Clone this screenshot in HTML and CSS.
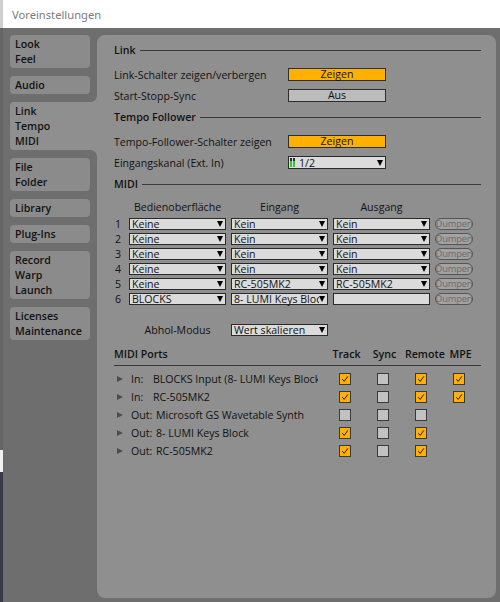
FILE: index.html
```html
<!DOCTYPE html>
<html lang="de">
<head>
<meta charset="utf-8">
<title>Voreinstellungen</title>
<link rel="stylesheet" href="styles.css">
</head>
<body>
<div class="screen">
  <div class="edge"><div class="e1"></div><div class="e2"></div><div class="e3"></div><div class="e4"></div></div>
  <div class="window">
    <div class="titlebar">Voreinstellungen</div>
    <div class="main">
      <nav class="tabs">
        <div class="tab">Look<br>Feel</div>
        <div class="tab">Audio</div>
        <div class="tab active">Link<br>Tempo<br>MIDI</div>
        <div class="tab">File<br>Folder</div>
        <div class="tab">Library</div>
        <div class="tab">Plug-Ins</div>
        <div class="tab">Record<br>Warp<br>Launch</div>
        <div class="tab">Licenses<br>Maintenance</div>
      </nav>
      <section class="panel">
        <div class="sec first"><span>Link</span><i class="rule"></i></div>
        <div class="row"><span class="label">Link-Schalter zeigen/verbergen</span><span class="btn on">Zeigen</span></div>
        <div class="row"><span class="label">Start-Stopp-Sync</span><span class="btn off">Aus</span></div>

        <div class="sec"><span>Tempo Follower</span><i class="rule"></i></div>
        <div class="row"><span class="label">Tempo-Follower-Schalter zeigen</span><span class="btn on">Zeigen</span></div>
        <div class="row"><span class="label">Eingangskanal (Ext. In)</span><span class="dd wide"><span class="meter"></span><span class="v">1/2</span></span></div>

        <div class="sec"><span>MIDI</span><i class="rule"></i></div>
        <div class="grid colhead">
          <span></span><span>Bedienoberfläche</span><span>Eingang</span><span>Ausgang</span><span></span>
        </div>
        <div class="grid midi">
          <span class="num">1</span><span class="dd"><span class="v">Keine</span></span><span class="dd"><span class="v">Kein</span></span><span class="dd"><span class="v">Kein</span></span><span class="dump">Dumpen</span>
          <span class="num">2</span><span class="dd"><span class="v">Keine</span></span><span class="dd"><span class="v">Kein</span></span><span class="dd"><span class="v">Kein</span></span><span class="dump">Dumpen</span>
          <span class="num">3</span><span class="dd"><span class="v">Keine</span></span><span class="dd"><span class="v">Kein</span></span><span class="dd"><span class="v">Kein</span></span><span class="dump">Dumpen</span>
          <span class="num">4</span><span class="dd"><span class="v">Keine</span></span><span class="dd"><span class="v">Kein</span></span><span class="dd"><span class="v">Kein</span></span><span class="dump">Dumpen</span>
          <span class="num">5</span><span class="dd"><span class="v">Keine</span></span><span class="dd"><span class="v">RC-505MK2</span></span><span class="dd"><span class="v">RC-505MK2</span></span><span class="dump">Dumpen</span>
          <span class="num">6</span><span class="dd"><span class="v">BLOCKS</span></span><span class="dd"><span class="v clip">8- LUMI Keys Block</span></span><span class="dd empty"></span><span class="dump">Dumpen</span>
        </div>
        <div class="grid abhol">
          <span></span><span class="ablabel">Abhol-Modus</span><span class="dd"><span class="v">Wert skalieren</span></span>
        </div>

        <div class="ports head">
          <span class="phead">MIDI Ports</span><span class="ch">Track</span><span class="ch">Sync</span><span class="ch">Remote</span><span class="ch">MPE</span>
        </div>
        <div class="prule"></div>
        <div class="ports">
          <span class="port"><i class="tri"></i><span class="lab">In:</span><span class="nm clip">BLOCKS Input (8- LUMI Keys Block)</span></span>
          <span class="cb on"><svg viewBox="0 0 10 10"><path d="M2.3 5.2 L4.2 7.4 L7.9 2.3"/></svg></span><span class="cb"></span><span class="cb on"><svg viewBox="0 0 10 10"><path d="M2.3 5.2 L4.2 7.4 L7.9 2.3"/></svg></span><span class="cb on"><svg viewBox="0 0 10 10"><path d="M2.3 5.2 L4.2 7.4 L7.9 2.3"/></svg></span>

          <span class="port"><i class="tri"></i><span class="lab">In:</span><span class="nm">RC-505MK2</span></span>
          <span class="cb on"><svg viewBox="0 0 10 10"><path d="M2.3 5.2 L4.2 7.4 L7.9 2.3"/></svg></span><span class="cb"></span><span class="cb on"><svg viewBox="0 0 10 10"><path d="M2.3 5.2 L4.2 7.4 L7.9 2.3"/></svg></span><span class="cb on"><svg viewBox="0 0 10 10"><path d="M2.3 5.2 L4.2 7.4 L7.9 2.3"/></svg></span>

          <span class="port"><i class="tri"></i><span class="lab out">Out:</span><span class="nm">Microsoft GS Wavetable Synth</span></span>
          <span class="cb"></span><span class="cb"></span><span class="cb"></span><span></span>

          <span class="port"><i class="tri"></i><span class="lab out">Out:</span><span class="nm">8- LUMI Keys Block</span></span>
          <span class="cb on"><svg viewBox="0 0 10 10"><path d="M2.3 5.2 L4.2 7.4 L7.9 2.3"/></svg></span><span class="cb"></span><span class="cb on"><svg viewBox="0 0 10 10"><path d="M2.3 5.2 L4.2 7.4 L7.9 2.3"/></svg></span><span></span>

          <span class="port"><i class="tri"></i><span class="lab out">Out:</span><span class="nm">RC-505MK2</span></span>
          <span class="cb on"><svg viewBox="0 0 10 10"><path d="M2.3 5.2 L4.2 7.4 L7.9 2.3"/></svg></span><span class="cb"></span><span class="cb on"><svg viewBox="0 0 10 10"><path d="M2.3 5.2 L4.2 7.4 L7.9 2.3"/></svg></span><span></span>
        </div>
      </section>
    </div>
  </div>
</div>
</body>
</html>
```
FILE: styles.css
```css
html, body {
  margin: 0;
  padding: 0;
}
body {
  width: 500px;
  height: 602px;
  overflow: hidden;
  font-family: "Open Sans", "DejaVu Sans", sans-serif;
  font-size: 10.6px;
  font-weight: 500;
  color: #121212;
}
.screen {
  display: flex;
  height: 602px;
}
.edge {
  width: 3px;
  display: flex;
  flex-direction: column;
}
.e1 { height: 28px; background: #cfcfcf; }
.e2 { height: 422px; background: #656565; }
.e3 { height: 22px; background: #f2f2f2; }
.e4 { flex: 1; background: #383b47; }

.window {
  flex: 1;
  display: flex;
  flex-direction: column;
  min-width: 0;
}
.titlebar {
  height: 28px;
  background: #ffffff;
  padding-left: 9px;
  display: flex;
  align-items: center;
  font-family: "Noto Sans", "Open Sans", sans-serif;
  font-size: 11.2px;
  font-weight: 400;
  color: #7b7b7b;
}
.main {
  flex: 1;
  background: #6e6e6e;
  display: flex;
  padding: 7px 4px 4px 7px;
}
.tabs {
  width: 87px;
  flex: none;
  display: flex;
  flex-direction: column;
  gap: 8px;
}
.tab {
  width: 80px;
  box-sizing: border-box;
  background: #8b8b8b;
  border-radius: 4px;
  padding: 2px 0 1px 5px;
  line-height: 15px;
  font-weight: 600;
}
.tab.active {
  width: 87px;
  background: #8f8f8f;
  border-radius: 4px 0 0 4px;
  position: relative;
}
.tab.active::before,
.tab.active::after {
  content: "";
  position: absolute;
  right: 0;
  width: 6px;
  height: 6px;
}
.tab.active::before {
  top: -6px;
  background: radial-gradient(circle at 0 0, transparent 5.5px, #8f8f8f 6px);
}
.tab.active::after {
  bottom: -6px;
  background: radial-gradient(circle at 0 100%, transparent 5.5px, #8f8f8f 6px);
}

.panel {
  flex: 1;
  background: #8f8f8f;
  border-radius: 8px;
  padding: 7px 15px 0 17px;
}

.sec {
  height: 16px;
  display: flex;
  align-items: center;
  gap: 4px;
  font-weight: 600;
  margin: 3px 0 6px;
}
.sec.first { margin-top: 0; }
.rule {
  flex: 1;
  height: 1px;
  background: #3a3a3a;
}
.row {
  height: 21px;
  display: flex;
  align-items: center;
}
.label {
  width: 174px;
  flex: none;
}
.btn {
  width: 98px;
  height: 13px;
  box-sizing: border-box;
  border: 1px solid #2e2e2e;
  text-align: center;
  line-height: 11px;
}
.btn.on { background: #ffb000; }
.btn.off { background: #bcbcbc; }

.dd {
  height: 12px;
  box-sizing: border-box;
  border: 1px solid #2a2a2a;
  background: #dbdbdb;
  display: flex;
  align-items: center;
  padding: 0 2px 0 2px;
  line-height: 10px;
  white-space: nowrap;
}
.dd .v {
  flex: 1;
  min-width: 0;
}
.clip {
  overflow-x: clip;
  overflow-y: visible;
}
.dd::after {
  content: "";
  flex: none;
  border-left: 3px solid transparent;
  border-right: 3px solid transparent;
  border-top: 6px solid #000;
}
.dd.empty::after { display: none; }
.dd.wide {
  width: 98px;
  height: 13px;
  padding-left: 1px;
}
.meter {
  flex: none;
  width: 5px;
  height: 9px;
  margin-right: 4px;
  background:
    linear-gradient(to right, transparent 2px, #dbdbdb 2px, #dbdbdb 3px, transparent 3px),
    linear-gradient(to bottom, #2b2b2b 0 3px, #2ecc2e 3px 9px);
}

.grid {
  display: grid;
  grid-template-columns: 10px 97px 97px 97px 38px;
  column-gap: 5px;
}
.colhead {
  height: 15px;
  margin-top: 7px;
  margin-bottom: 4px;
  align-items: center;
  text-align: center;
}
.midi {
  grid-auto-rows: 12px;
  row-gap: 3px;
}
.num {
  padding-left: 1px;
  line-height: 12px;
}
.dump {
  box-sizing: border-box;
  height: 12px;
  border: 1px solid #555;
  border-radius: 6px;
  background: #a2a2a2;
  color: #6b6b6b;
  font-size: 9.4px;
  line-height: 10px;
  letter-spacing: -0.2px;
  white-space: nowrap;
  display: flex;
  justify-content: center;
}
.abhol {
  margin-top: 19px;
  grid-auto-rows: 12px;
}
.ablabel {
  text-align: center;
  line-height: 12px;
}

.ports {
  display: grid;
  grid-template-columns: 212px 38px 38px 38px 38px;
  grid-auto-rows: 18px;
  align-items: center;
}
.ports.head {
  margin-top: 11px;
  grid-auto-rows: 14px;
  font-weight: 600;
}
.ch {
  text-align: center;
  padding-left: 3px;
}
.prule {
  height: 1px;
  background: #3a3a3a;
  margin: 4px 0 4px 0;
}
.port {
  display: flex;
  align-items: center;
  white-space: nowrap;
}
.tri {
  flex: none;
  width: 0;
  height: 0;
  margin-left: 3px;
  border-top: 3.5px solid transparent;
  border-bottom: 3.5px solid transparent;
  border-left: 6px solid #4c4c4c;
}
.lab {
  flex: none;
  min-width: 22px;
  margin-left: 8px;
}
.lab.out { margin-right: 3px; }
.nm {
  width: 165px;
}
.cb {
  justify-self: center;
  width: 12px;
  height: 12px;
  box-sizing: border-box;
  border: 1px solid #3a3a3a;
  background: #c2c2c2;
  display: flex;
}
.cb.on { background: #ffb000; }
.cb svg {
  width: 10px;
  height: 10px;
}
.cb path {
  fill: none;
  stroke: #1e1e1e;
  stroke-width: 1;
}
```
